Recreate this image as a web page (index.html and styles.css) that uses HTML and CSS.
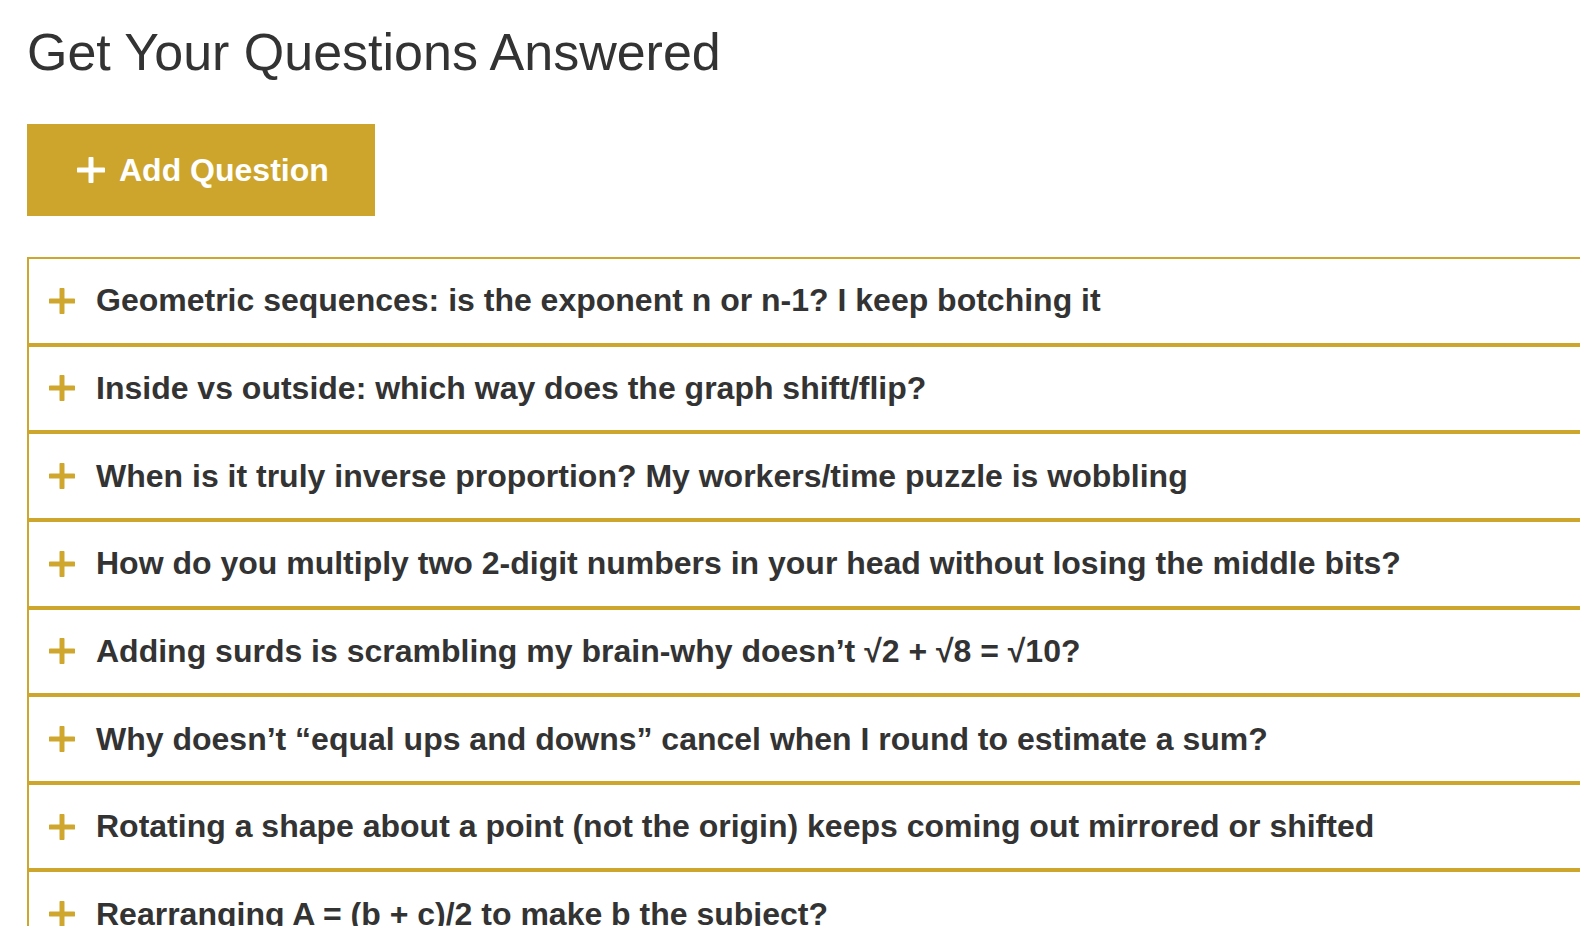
FILE: index.html
```html
<!DOCTYPE html>
<html lang="en">
<head>
<meta charset="utf-8">
<title>Get Your Questions Answered</title>
<link rel="stylesheet" href="styles.css">
</head>
<body>
<main class="page">
  <h1 class="title">Get Your Questions Answered</h1>
  <button class="add-btn" type="button">
    <svg class="add-icon" viewBox="0 0 28 26" aria-hidden="true"><path d="M14 1.5V24.5M1.5 13H26.5" /></svg>
    <span>Add Question</span>
  </button>
  <ul class="faq">
    <li class="faq-item"><svg class="plus" viewBox="0 0 26 26" aria-hidden="true"><path d="M13 1.5V24.5M1.5 13H24.5" /></svg><span class="q">Geometric sequences: is the exponent n or n-1? I keep botching it</span></li>
    <li class="faq-item"><svg class="plus" viewBox="0 0 26 26" aria-hidden="true"><path d="M13 1.5V24.5M1.5 13H24.5" /></svg><span class="q">Inside vs outside: which way does the graph shift/flip?</span></li>
    <li class="faq-item"><svg class="plus" viewBox="0 0 26 26" aria-hidden="true"><path d="M13 1.5V24.5M1.5 13H24.5" /></svg><span class="q">When is it truly inverse proportion? My workers/time puzzle is wobbling</span></li>
    <li class="faq-item"><svg class="plus" viewBox="0 0 26 26" aria-hidden="true"><path d="M13 1.5V24.5M1.5 13H24.5" /></svg><span class="q">How do you multiply two 2-digit numbers in your head without losing the middle bits?</span></li>
    <li class="faq-item"><svg class="plus" viewBox="0 0 26 26" aria-hidden="true"><path d="M13 1.5V24.5M1.5 13H24.5" /></svg><span class="q">Adding surds is scrambling my brain-why doesn’t √2 + √8 = √10?</span></li>
    <li class="faq-item"><svg class="plus" viewBox="0 0 26 26" aria-hidden="true"><path d="M13 1.5V24.5M1.5 13H24.5" /></svg><span class="q">Why doesn’t “equal ups and downs” cancel when I round to estimate a sum?</span></li>
    <li class="faq-item"><svg class="plus" viewBox="0 0 26 26" aria-hidden="true"><path d="M13 1.5V24.5M1.5 13H24.5" /></svg><span class="q">Rotating a shape about a point (not the origin) keeps coming out mirrored or shifted</span></li>
    <li class="faq-item"><svg class="plus" viewBox="0 0 26 26" aria-hidden="true"><path d="M13 1.5V24.5M1.5 13H24.5" /></svg><span class="q">Rearranging A = (b + c)/2 to make b the subject?</span></li>
  </ul>
</main>
</body>
</html>
```
FILE: styles.css
```css
html, body {
  margin: 0;
  padding: 0;
  overflow: hidden;
  background: #ffffff;
}

body {
  font-family: "Liberation Sans", Arial, Helvetica, sans-serif;
  color: #333333;
}

.page {
  padding: 22px 0 0 27px;
  width: 1640px;
}

.title {
  margin: 0;
  font-size: 52px;
  font-weight: 400;
  line-height: 60px;
  color: #333333;
}

.add-btn {
  margin-top: 42px;
  display: flex;
  align-items: center;
  gap: 14px;
  width: 348px;
  height: 92px;
  padding: 0 0 0 50px;
  border: none;
  border-radius: 0;
  background: #cda52c;
  color: #ffffff;
  font-family: "Liberation Sans", Arial, Helvetica, sans-serif;
  font-size: 32px;
  font-weight: 700;
  line-height: 37px;
  cursor: pointer;
}

.add-icon {
  width: 28px;
  height: 26px;
  flex: none;
}

.add-icon path {
  stroke: #ffffff;
  stroke-width: 5;
  stroke-linecap: round;
  fill: none;
}

.faq {
  list-style: none;
  margin: 41px 0 0 0;
  padding: 0;
}

.faq-item {
  display: flex;
  align-items: center;
  gap: 21px;
  height: 83.65px;
  padding-left: 20px;
  border: 2px solid #cda62d;
  background: #ffffff;
}

.plus {
  width: 26px;
  height: 26px;
  flex: none;
}

.plus path {
  stroke: #cfa72f;
  stroke-width: 5;
  stroke-linecap: round;
  fill: none;
}

.q {
  font-size: 32px;
  font-weight: 700;
  line-height: 37px;
  color: #333333;
  white-space: nowrap;
}
```
